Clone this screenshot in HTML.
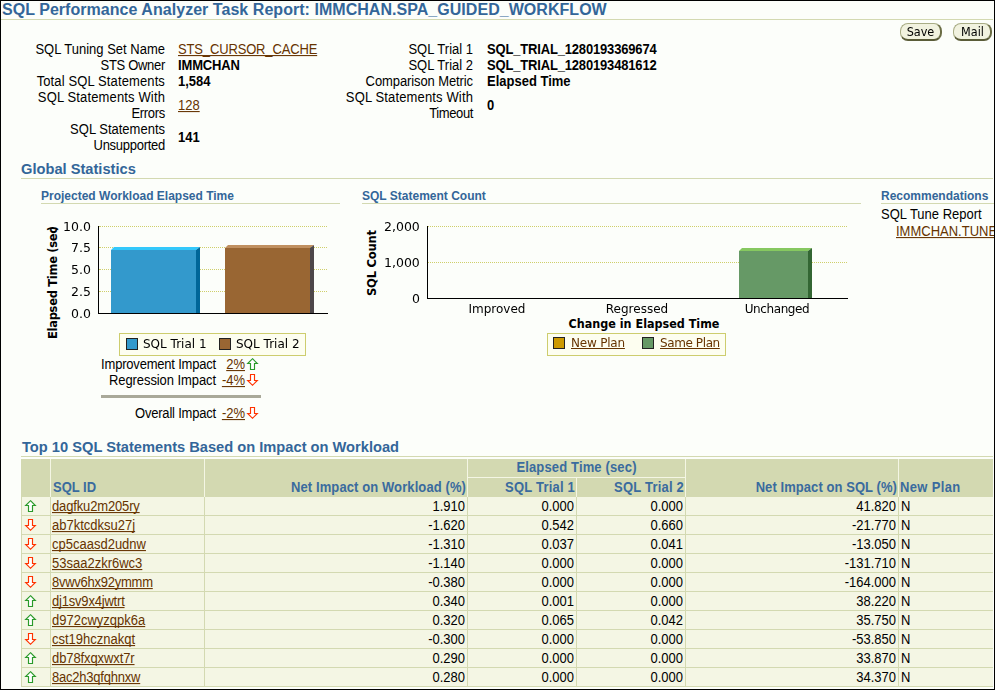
<!DOCTYPE html><html><head><meta charset="utf-8"><title>SQL Performance Analyzer Task Report</title><style>
html,body{margin:0;padding:0;}
body{width:995px;height:690px;overflow:hidden;background:#fcfefa;font-family:"Liberation Sans",sans-serif;font-size:13px;line-height:16px;color:#000;position:relative;}
#frame{position:absolute;left:0;top:0;width:993px;height:688px;border-style:solid;border-color:#000;border-width:1px 1px 1px 1px;z-index:50;pointer-events:none;box-sizing:content-box;}
.a{position:absolute;white-space:nowrap;}
.r{text-align:right;}
.b{font-weight:bold;}
a{color:#663300;text-decoration:underline;text-decoration-skip-ink:none;}
.hl{position:absolute;height:1px;background:#d3d9b1;}
.h1{font-size:16px;font-weight:bold;color:#336699;line-height:18px;}
.h2{font-size:14.67px;font-weight:bold;color:#336699;line-height:17px;}
.h3{font-size:12px;font-weight:bold;color:#336699;line-height:14px;}
.dv{font-family:"DejaVu Sans",sans-serif;font-size:12px;line-height:14px;will-change:transform;}
.dvb{font-family:"DejaVu Sans",sans-serif;font-size:11px;line-height:13px;font-weight:bold;}
.btn{position:absolute;height:15px;top:23px;border:solid;border-width:1px 2px 2px 1px;border-color:#a9ad86 #6b6d45 #5a5c38 #a9ad86;border-radius:8px;background:#f1f2df;will-change:transform;font-family:"DejaVu Sans Condensed","DejaVu Sans",sans-serif;font-size:12.5px;line-height:16px;text-align:center;color:#000;}
.ar{position:absolute;overflow:visible;}
.grid{position:absolute;height:0;border-top:1px dotted #cfcf6a;}
.sw{position:absolute;width:10px;height:10px;border:1px solid #222;}
.lg{position:absolute;border:1px solid #cdcd6e;background:#fdfef0;}
.th{position:absolute;background:#d3d9b1;border-left:1px solid #f4f6e4;box-sizing:border-box;color:#3a6b9e;font-weight:bold;font-size:13px;}
.td{position:absolute;background:#f4f6e4;border-left:1px solid #d3d9b1;border-bottom:1px solid #d3d9b1;box-sizing:border-box;height:19px;line-height:20px;}
.td span,.th span{position:absolute;white-space:nowrap;transform:scaleY(1.07);}
.td span{transform-origin:0 14.5px;}
.th span{transform-origin:0 12.5px;}
.t{transform:scaleY(1.07);transform-origin:0 12.5px;}
</style></head><body>
<div id="frame"></div>
<div class="a h1" style="left:2px;top:1px;letter-spacing:0.04px">SQL Performance Analyzer Task Report: IMMCHAN.SPA_GUIDED_WORKFLOW</div>
<div class="hl" style="left:1px;top:19px;width:992px"></div>
<div class="btn" style="left:900px;width:39px">Save</div>
<div class="btn" style="left:953px;width:36px;text-indent:1px">Mail</div>
<div class="a r t" style="right:830px;top:42px">SQL Tuning Set Name</div>
<div class="a t" style="left:178px;top:42px;letter-spacing:-0.15px"><a>STS_CURSOR_CACHE</a></div>
<div class="a r t" style="right:830px;top:58px;letter-spacing:-0.3px">STS Owner</div>
<div class="a t b" style="left:178px;top:58px;letter-spacing:-0.15px">IMMCHAN</div>
<div class="a r t" style="right:830px;top:74px;letter-spacing:0.12px">Total SQL Statements</div>
<div class="a t b" style="left:178px;top:74px">1,584</div>
<div class="a r t" style="right:830px;top:90px;letter-spacing:0.14px">SQL Statements With</div>
<div class="a r t" style="right:830px;top:106px;letter-spacing:-0.3px">Errors</div>
<div class="a t" style="left:178px;top:98px"><a>128</a></div>
<div class="a r t" style="right:830px;top:122px">SQL Statements</div>
<div class="a r t" style="right:830px;top:138px;letter-spacing:-0.27px">Unsupported</div>
<div class="a t b" style="left:178px;top:130px">141</div>
<div class="a r t" style="right:522px;top:42px">SQL Trial 1</div>
<div class="a t b" style="left:487px;top:42px;letter-spacing:-0.17px">SQL_TRIAL_1280193369674</div>
<div class="a r t" style="right:522px;top:58px">SQL Trial 2</div>
<div class="a t b" style="left:487px;top:58px;letter-spacing:-0.17px">SQL_TRIAL_1280193481612</div>
<div class="a r t" style="right:522px;top:74px;letter-spacing:-0.1px">Comparison Metric</div>
<div class="a t b" style="left:487px;top:74px">Elapsed Time</div>
<div class="a r t" style="right:522px;top:90px;letter-spacing:0.14px">SQL Statements With</div>
<div class="a r t" style="right:522px;top:106px;letter-spacing:-0.4px">Timeout</div>
<div class="a t b" style="left:487px;top:98px">0</div>
<div class="a h2" style="left:21px;top:161px">Global Statistics</div>
<div class="hl" style="left:21px;top:178px;width:972px"></div>
<div class="a h3" style="left:41px;top:189px">Projected Workload Elapsed Time</div>
<div class="hl" style="left:41px;top:203px;width:299px"></div>
<div class="a h3" style="left:362px;top:189px">SQL Statement Count</div>
<div class="hl" style="left:362px;top:203px;width:499px"></div>
<div class="a h3" style="left:881px;top:189px">Recommendations</div>
<div class="hl" style="left:881px;top:203px;width:113px"></div>
<div class="a t" style="left:881px;top:207px">SQL Tune Report</div>
<div class="a t" style="left:896px;top:224px;width:98px;overflow:hidden"><a>IMMCHAN.TUNE_SPA_GUIDED_WORKFLOW</a></div>
<div class="grid" style="left:99px;top:226px;width:228px"></div>
<div class="grid" style="left:99px;top:247px;width:228px"></div>
<div class="grid" style="left:99px;top:269px;width:228px"></div>
<div class="grid" style="left:99px;top:291px;width:228px"></div>
<div class="a dv r" style="right:904px;top:220px;font-size:12.5px">10.0</div>
<div class="a dv r" style="right:904px;top:241px;font-size:12.5px">7.5</div>
<div class="a dv r" style="right:904px;top:263px;font-size:12.5px">5.0</div>
<div class="a dv r" style="right:904px;top:285px;font-size:12.5px">2.5</div>
<div class="a dv r" style="right:904px;top:307px;font-size:12.5px">0.0</div>
<div class="a dvb" style="left:47px;top:339px;font-size:11.5px;letter-spacing:-0.3px;transform-origin:0 0;transform:rotate(-90deg)">Elapsed Time (sec<span style="margin-left:-4px">)</span></div>
<svg class="a" style="left:98px;top:220px" width="235" height="100" viewBox="98 220 235 100">
<polygon points="111,250 114,247 200,247 196,250" fill="#33c8fb"/>
<polygon points="196,250 200,247 200,313 196,313" fill="#006699"/>
<rect x="111" y="250" width="85" height="63" fill="#3399cc"/>
<polygon points="225,248 228,245 314,245 310,248" fill="#c09060"/>
<polygon points="310,248 314,245 314,313 310,313" fill="#4d474a"/>
<rect x="225" y="248" width="85" height="65" fill="#996633"/>
<rect x="98" y="226" width="1" height="88" fill="#000"/>
<rect x="98" y="313" width="230" height="1" fill="#000"/>
</svg>
<div class="lg" style="left:119px;top:333px;width:185px;height:21px"></div>
<div class="sw" style="left:126px;top:338px;background:#3399cc"></div>
<div class="a dv" style="left:143px;top:337px">SQL Trial 1</div>
<div class="sw" style="left:219px;top:338px;background:#996633"></div>
<div class="a dv" style="left:236px;top:337px">SQL Trial 2</div>
<div class="a r t" style="right:779px;top:357px;letter-spacing:-0.2px">Improvement Impact</div>
<div class="a r t" style="right:750px;top:357px"><a>2%</a></div>
<svg class="ar" style="left:247px;top:358px" width="11" height="12" viewBox="0 0 11 12"><path d="M5.5 0.7 L10.3 5.5 H7.5 V11.5 H3.5 V5.5 H0.7 Z" fill="#ffffff" stroke="#2a9a2a" stroke-width="1.15" stroke-linejoin="miter"/></svg>
<div class="a r t" style="right:779px;top:373px;letter-spacing:-0.08px">Regression Impact</div>
<div class="a r t" style="right:750px;top:373px"><a>-4%</a></div>
<svg class="ar" style="left:247px;top:374px" width="11" height="12" viewBox="0 0 11 12"><path d="M3.5 0.5 H7.5 V6.5 H10.3 L5.5 11.3 L0.7 6.5 H3.5 Z" fill="#ffffff" stroke="#ff3300" stroke-width="1.15" stroke-linejoin="miter"/></svg>
<div class="a" style="left:101px;top:395px;width:160px;height:3px;background:#a9a999"></div>
<div class="a r t" style="right:779px;top:406px;letter-spacing:-0.2px">Overall Impact</div>
<div class="a r t" style="right:750px;top:406px"><a>-2%</a></div>
<svg class="ar" style="left:247px;top:407px" width="11" height="12" viewBox="0 0 11 12"><path d="M3.5 0.5 H7.5 V6.5 H10.3 L5.5 11.3 L0.7 6.5 H3.5 Z" fill="#ffffff" stroke="#ff3300" stroke-width="1.15" stroke-linejoin="miter"/></svg>
<div class="grid" style="left:428px;top:226px;width:419px"></div>
<div class="grid" style="left:428px;top:262px;width:419px"></div>
<div class="a dv r" style="right:575.5px;top:220px;font-size:12.5px">2,000</div>
<div class="a dv r" style="right:575.5px;top:256px;font-size:12.5px">1,000</div>
<div class="a dv r" style="right:575.5px;top:292px;font-size:12.5px">0</div>
<div class="a dvb" style="left:366px;top:296px;font-size:11.5px;letter-spacing:-0.2px;transform-origin:0 0;transform:rotate(-90deg)">SQL Count</div>
<svg class="a" style="left:427px;top:220px" width="425" height="85" viewBox="427 220 425 85">
<polygon points="739,251 742,248 812,248 808,251" fill="#86c860"/>
<polygon points="808,251 812,248 812,298 808,298" fill="#336633"/>
<rect x="739" y="251" width="69" height="47" fill="#669966"/>
<rect x="427" y="226" width="1" height="73" fill="#000"/>
<rect x="427" y="298" width="421" height="1" fill="#000"/>
</svg>
<div class="a dv" style="left:447px;width:100px;text-align:center;top:302px;letter-spacing:0px">Improved</div>
<div class="a dv" style="left:587px;width:100px;text-align:center;top:302px;letter-spacing:0px">Regressed</div>
<div class="a dv" style="left:727px;width:100px;text-align:center;top:302px;letter-spacing:-0.4px">Unchanged</div>
<div class="a dvb" style="left:544px;width:200px;text-align:center;top:317px;font-size:11.2px;transform:scaleY(1.08);transform-origin:50% 0">Change in Elapsed Time</div>
<div class="lg" style="left:547px;top:333px;width:177px;height:21px"></div>
<div class="sw" style="left:553px;top:337px;background:#cc9900"></div>
<div class="a dv" style="left:571px;top:336px;letter-spacing:-0.2px"><a>New Plan</a></div>
<div class="sw" style="left:642px;top:337px;background:#669966"></div>
<div class="a dv" style="left:660px;top:336px;letter-spacing:-0.4px"><a>Same Plan</a></div>
<div class="a h2" style="left:22px;top:439px">Top 10 SQL Statements Based on Impact on Workload</div>
<div class="hl" style="left:21px;top:456px;width:972px"></div>
<div class="th" style="left:21px;top:459px;width:29px;height:38px;border-left:1px solid #d3d9b1;"></div>
<div class="th" style="left:50px;top:459px;width:154px;height:38px;"><span style="left:2px;bottom:1px">SQL ID</span></div>
<div class="th" style="left:204px;top:459px;width:263px;height:38px;"><span style="right:1px;bottom:1px;letter-spacing:0.1px">Net Impact on Workload (%)</span></div>
<div class="th" style="left:467px;top:459px;width:218px;height:19px;border-bottom:1px solid #f4f6e4;"><span style="left:0;right:0;text-align:center;bottom:1px;letter-spacing:0.15px">Elapsed Time (sec)</span></div>
<div class="th" style="left:467px;top:478px;width:109px;height:19px;"><span style="right:1px;bottom:1px;letter-spacing:0.2px">SQL Trial 1</span></div>
<div class="th" style="left:576px;top:478px;width:109px;height:19px;"><span style="right:1px;bottom:1px;letter-spacing:0.2px">SQL Trial 2</span></div>
<div class="th" style="left:685px;top:459px;width:213px;height:38px;"><span style="right:1px;bottom:1px;letter-spacing:0.07px">Net Impact on SQL (%)</span></div>
<div class="th" style="left:898px;top:459px;width:95px;height:38px;"><span style="left:1px;bottom:1px;letter-spacing:0.35px">New Plan</span></div>
<div class="td" style="left:21px;top:497px;width:29px"></div>
<svg class="ar" style="left:25px;top:500px" width="11" height="12" viewBox="0 0 11 12"><path d="M5.5 0.7 L10.3 5.5 H7.5 V11.5 H3.5 V5.5 H0.7 Z" fill="#ffffff" stroke="#2a9a2a" stroke-width="1.15" stroke-linejoin="miter"/></svg>
<div class="td" style="left:50px;top:497px;width:154px"><span style="left:1px;letter-spacing:-0.15px"><a>dagfku2m205ry</a></span></div>
<div class="td" style="left:204px;top:497px;width:263px"><span style="right:2px">1.910</span></div>
<div class="td" style="left:467px;top:497px;width:109px"><span style="right:2px">0.000</span></div>
<div class="td" style="left:576px;top:497px;width:109px"><span style="right:2px">0.000</span></div>
<div class="td" style="left:685px;top:497px;width:213px"><span style="right:2px">41.820</span></div>
<div class="td" style="left:898px;top:497px;width:95px"><span style="left:2px">N</span></div>
<div class="td" style="left:21px;top:516px;width:29px"></div>
<svg class="ar" style="left:25px;top:519px" width="11" height="12" viewBox="0 0 11 12"><path d="M3.5 0.5 H7.5 V6.5 H10.3 L5.5 11.3 L0.7 6.5 H3.5 Z" fill="#ffffff" stroke="#ff3300" stroke-width="1.15" stroke-linejoin="miter"/></svg>
<div class="td" style="left:50px;top:516px;width:154px"><span style="left:1px"><a>ab7ktcdksu27j</a></span></div>
<div class="td" style="left:204px;top:516px;width:263px"><span style="right:2px">-1.620</span></div>
<div class="td" style="left:467px;top:516px;width:109px"><span style="right:2px">0.542</span></div>
<div class="td" style="left:576px;top:516px;width:109px"><span style="right:2px">0.660</span></div>
<div class="td" style="left:685px;top:516px;width:213px"><span style="right:2px">-21.770</span></div>
<div class="td" style="left:898px;top:516px;width:95px"><span style="left:2px">N</span></div>
<div class="td" style="left:21px;top:535px;width:29px"></div>
<svg class="ar" style="left:25px;top:538px" width="11" height="12" viewBox="0 0 11 12"><path d="M3.5 0.5 H7.5 V6.5 H10.3 L5.5 11.3 L0.7 6.5 H3.5 Z" fill="#ffffff" stroke="#ff3300" stroke-width="1.15" stroke-linejoin="miter"/></svg>
<div class="td" style="left:50px;top:535px;width:154px"><span style="left:1px"><a>cp5caasd2udnw</a></span></div>
<div class="td" style="left:204px;top:535px;width:263px"><span style="right:2px">-1.310</span></div>
<div class="td" style="left:467px;top:535px;width:109px"><span style="right:2px">0.037</span></div>
<div class="td" style="left:576px;top:535px;width:109px"><span style="right:2px">0.041</span></div>
<div class="td" style="left:685px;top:535px;width:213px"><span style="right:2px">-13.050</span></div>
<div class="td" style="left:898px;top:535px;width:95px"><span style="left:2px">N</span></div>
<div class="td" style="left:21px;top:554px;width:29px"></div>
<svg class="ar" style="left:25px;top:557px" width="11" height="12" viewBox="0 0 11 12"><path d="M3.5 0.5 H7.5 V6.5 H10.3 L5.5 11.3 L0.7 6.5 H3.5 Z" fill="#ffffff" stroke="#ff3300" stroke-width="1.15" stroke-linejoin="miter"/></svg>
<div class="td" style="left:50px;top:554px;width:154px"><span style="left:1px"><a>53saa2zkr6wc3</a></span></div>
<div class="td" style="left:204px;top:554px;width:263px"><span style="right:2px">-1.140</span></div>
<div class="td" style="left:467px;top:554px;width:109px"><span style="right:2px">0.000</span></div>
<div class="td" style="left:576px;top:554px;width:109px"><span style="right:2px">0.000</span></div>
<div class="td" style="left:685px;top:554px;width:213px"><span style="right:2px">-131.710</span></div>
<div class="td" style="left:898px;top:554px;width:95px"><span style="left:2px">N</span></div>
<div class="td" style="left:21px;top:573px;width:29px"></div>
<svg class="ar" style="left:25px;top:576px" width="11" height="12" viewBox="0 0 11 12"><path d="M3.5 0.5 H7.5 V6.5 H10.3 L5.5 11.3 L0.7 6.5 H3.5 Z" fill="#ffffff" stroke="#ff3300" stroke-width="1.15" stroke-linejoin="miter"/></svg>
<div class="td" style="left:50px;top:573px;width:154px"><span style="left:1px;letter-spacing:-0.25px"><a>8vwv6hx92ymmm</a></span></div>
<div class="td" style="left:204px;top:573px;width:263px"><span style="right:2px">-0.380</span></div>
<div class="td" style="left:467px;top:573px;width:109px"><span style="right:2px">0.000</span></div>
<div class="td" style="left:576px;top:573px;width:109px"><span style="right:2px">0.000</span></div>
<div class="td" style="left:685px;top:573px;width:213px"><span style="right:2px">-164.000</span></div>
<div class="td" style="left:898px;top:573px;width:95px"><span style="left:2px">N</span></div>
<div class="td" style="left:21px;top:592px;width:29px"></div>
<svg class="ar" style="left:25px;top:595px" width="11" height="12" viewBox="0 0 11 12"><path d="M5.5 0.7 L10.3 5.5 H7.5 V11.5 H3.5 V5.5 H0.7 Z" fill="#ffffff" stroke="#2a9a2a" stroke-width="1.15" stroke-linejoin="miter"/></svg>
<div class="td" style="left:50px;top:592px;width:154px"><span style="left:1px;letter-spacing:-0.2px"><a>dj1sv9x4jwtrt</a></span></div>
<div class="td" style="left:204px;top:592px;width:263px"><span style="right:2px">0.340</span></div>
<div class="td" style="left:467px;top:592px;width:109px"><span style="right:2px">0.001</span></div>
<div class="td" style="left:576px;top:592px;width:109px"><span style="right:2px">0.000</span></div>
<div class="td" style="left:685px;top:592px;width:213px"><span style="right:2px">38.220</span></div>
<div class="td" style="left:898px;top:592px;width:95px"><span style="left:2px">N</span></div>
<div class="td" style="left:21px;top:611px;width:29px"></div>
<svg class="ar" style="left:25px;top:614px" width="11" height="12" viewBox="0 0 11 12"><path d="M5.5 0.7 L10.3 5.5 H7.5 V11.5 H3.5 V5.5 H0.7 Z" fill="#ffffff" stroke="#2a9a2a" stroke-width="1.15" stroke-linejoin="miter"/></svg>
<div class="td" style="left:50px;top:611px;width:154px"><span style="left:1px"><a>d972cwyzqpk6a</a></span></div>
<div class="td" style="left:204px;top:611px;width:263px"><span style="right:2px">0.320</span></div>
<div class="td" style="left:467px;top:611px;width:109px"><span style="right:2px">0.065</span></div>
<div class="td" style="left:576px;top:611px;width:109px"><span style="right:2px">0.042</span></div>
<div class="td" style="left:685px;top:611px;width:213px"><span style="right:2px">35.750</span></div>
<div class="td" style="left:898px;top:611px;width:95px"><span style="left:2px">N</span></div>
<div class="td" style="left:21px;top:630px;width:29px"></div>
<svg class="ar" style="left:25px;top:633px" width="11" height="12" viewBox="0 0 11 12"><path d="M3.5 0.5 H7.5 V6.5 H10.3 L5.5 11.3 L0.7 6.5 H3.5 Z" fill="#ffffff" stroke="#ff3300" stroke-width="1.15" stroke-linejoin="miter"/></svg>
<div class="td" style="left:50px;top:630px;width:154px"><span style="left:1px"><a>cst19hcznakqt</a></span></div>
<div class="td" style="left:204px;top:630px;width:263px"><span style="right:2px">-0.300</span></div>
<div class="td" style="left:467px;top:630px;width:109px"><span style="right:2px">0.000</span></div>
<div class="td" style="left:576px;top:630px;width:109px"><span style="right:2px">0.000</span></div>
<div class="td" style="left:685px;top:630px;width:213px"><span style="right:2px">-53.850</span></div>
<div class="td" style="left:898px;top:630px;width:95px"><span style="left:2px">N</span></div>
<div class="td" style="left:21px;top:649px;width:29px"></div>
<svg class="ar" style="left:25px;top:652px" width="11" height="12" viewBox="0 0 11 12"><path d="M5.5 0.7 L10.3 5.5 H7.5 V11.5 H3.5 V5.5 H0.7 Z" fill="#ffffff" stroke="#2a9a2a" stroke-width="1.15" stroke-linejoin="miter"/></svg>
<div class="td" style="left:50px;top:649px;width:154px"><span style="left:1px;letter-spacing:-0.1px"><a>db78fxqxwxt7r</a></span></div>
<div class="td" style="left:204px;top:649px;width:263px"><span style="right:2px">0.290</span></div>
<div class="td" style="left:467px;top:649px;width:109px"><span style="right:2px">0.000</span></div>
<div class="td" style="left:576px;top:649px;width:109px"><span style="right:2px">0.000</span></div>
<div class="td" style="left:685px;top:649px;width:213px"><span style="right:2px">33.870</span></div>
<div class="td" style="left:898px;top:649px;width:95px"><span style="left:2px">N</span></div>
<div class="td" style="left:21px;top:668px;width:29px"></div>
<svg class="ar" style="left:25px;top:671px" width="11" height="12" viewBox="0 0 11 12"><path d="M5.5 0.7 L10.3 5.5 H7.5 V11.5 H3.5 V5.5 H0.7 Z" fill="#ffffff" stroke="#2a9a2a" stroke-width="1.15" stroke-linejoin="miter"/></svg>
<div class="td" style="left:50px;top:668px;width:154px"><span style="left:1px;letter-spacing:-0.22px"><a>8ac2h3qfqhnxw</a></span></div>
<div class="td" style="left:204px;top:668px;width:263px"><span style="right:2px">0.280</span></div>
<div class="td" style="left:467px;top:668px;width:109px"><span style="right:2px">0.000</span></div>
<div class="td" style="left:576px;top:668px;width:109px"><span style="right:2px">0.000</span></div>
<div class="td" style="left:685px;top:668px;width:213px"><span style="right:2px">34.370</span></div>
<div class="td" style="left:898px;top:668px;width:95px"><span style="left:2px">N</span></div>
</body></html>
